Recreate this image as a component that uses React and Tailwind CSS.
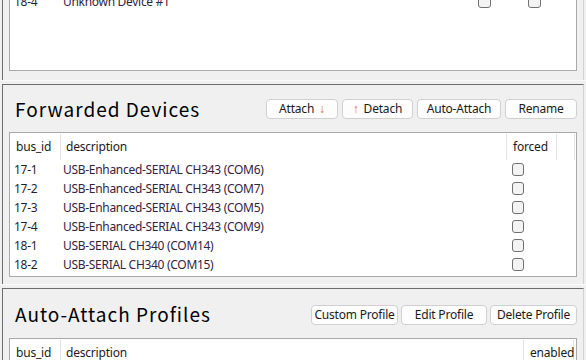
import React from "react";

const ui = { fontFamily: '"Noto Sans", "Open Sans", sans-serif' };
const title = { fontFamily: '"Noto Sans CJK JP", "Noto Sans", sans-serif' };

const forwarded = [
  { id: "17-1", desc: "USB-Enhanced-SERIAL CH343 (COM6)" },
  { id: "17-2", desc: "USB-Enhanced-SERIAL CH343 (COM7)" },
  { id: "17-3", desc: "USB-Enhanced-SERIAL CH343 (COM5)" },
  { id: "17-4", desc: "USB-Enhanced-SERIAL CH343 (COM9)" },
  { id: "18-1", desc: "USB-SERIAL CH340 (COM14)" },
  { id: "18-2", desc: "USB-SERIAL CH340 (COM15)" },
];

function Check({ w = "w-[12px]" }) {
  return (
    <span className={`block ${w} h-[13px] rounded-[3px] border border-[#717171] bg-[#f3f3f3]`} />
  );
}

function Btn({ children, w }) {
  return (
    <button
      className={`h-[20px] ${w} rounded-[4px] border border-[#d0d0d0] bg-[#fdfdfd] text-[12px] tracking-[-0.2px] leading-none text-[#1a1a1a] flex items-center justify-center`}
    >
      {children}
    </button>
  );
}

function HeaderCell({ children, className = "" }) {
  return (
    <div className={`h-[26px] flex items-center border-r border-[#e3e3e3] ${className}`}>
      {children}
    </div>
  );
}

export default function App() {
  return (
    <div className="w-[586px] h-[360px] overflow-hidden bg-[#f0f0f0] flex flex-col" style={ui}>
      {/* Top panel: connected devices (scrolled) */}
      <div className="ml-[2px] w-[582px] h-[80px] shrink-0 border-l border-r border-l-[#6d6d6d] border-r-[#d2d2d2] pl-[6px] pb-[9px] flex flex-col">
        <div className="w-[568px] flex-1 bg-white border border-t-0 border-[#a9a9a9] overflow-hidden">
          <div className="-mt-[8px] h-[19px] flex items-center text-[12px] tracking-[-0.3px]">
            <span className="w-[53px] pl-[4px] text-[#1f1f2e]">18-4</span>
            <span className="flex-1 text-[#34223f]">Unknown Device #1</span>
            <span className="w-[13px] mr-[37px]">
              <Check w="w-[13px]" />
            </span>
            <span className="w-[13px] mr-[35px]">
              <Check w="w-[13px]" />
            </span>
          </div>
        </div>
      </div>

      {/* sash */}
      <div className="h-[4px] shrink-0 border-t border-[#fafafa]" />

      {/* Forwarded Devices */}
      <div className="ml-[2px] w-[582px] h-[200px] shrink-0 border-t border-l border-r border-t-[#6d6d6d] border-l-[#6d6d6d] border-r-[#d2d2d2] pl-[6px] flex flex-col">
        <div className="h-[47px] flex items-center pr-[6px]">
          <div className="flex-1 pl-[6px] text-[19px] tracking-[1px] leading-none text-black" style={title}>
            Forwarded Devices
          </div>
          <div className="flex gap-[4px] mt-[1px]">
            <Btn w="w-[72px]">
              Attach <span className="ml-[5px] text-[#d9682c]">↓</span>
            </Btn>
            <Btn w="w-[71px]">
              <span className="mr-[5px] text-[#d9682c]">↑</span> Detach
            </Btn>
            <Btn w="w-[84px]">Auto-Attach</Btn>
            <Btn w="w-[72px]">Rename</Btn>
          </div>
        </div>
        <div className="w-[568px] h-[145px] bg-white border border-[#a9a9a9] flex flex-col">
          <div className="flex pt-[1px] text-[12px] tracking-[-0.2px] text-[#1a1a1a]">
            <HeaderCell className="w-[51px] pl-[6px]">bus_id</HeaderCell>
            <HeaderCell className="w-[446px] pl-[5px]">description</HeaderCell>
            <HeaderCell className="w-[50px] pl-[6px]">forced</HeaderCell>
            <HeaderCell className="w-[18px]" />
          </div>
          {forwarded.map((r) => (
            <div key={r.id} className="h-[19px] flex items-center text-[12px] tracking-[-0.3px]">
              <span className="w-[53px] pl-[4px] text-[#1f1f2e]">{r.id}</span>
              <span className="w-[449px] text-[#34223f]">{r.desc}</span>
              <Check />
            </div>
          ))}
        </div>
      </div>

      {/* sash */}
      <div className="h-[4px] shrink-0 border-t border-[#fafafa]" />

      {/* Auto-Attach Profiles */}
      <div className="ml-[2px] w-[582px] flex-1 border-t border-l border-r border-t-[#6d6d6d] border-l-[#6d6d6d] border-r-[#d2d2d2] pl-[6px] flex flex-col">
        <div className="h-[49px] flex items-center pr-[6px]">
          <div className="flex-1 pl-[6px] text-[19px] tracking-[1px] leading-none text-black" style={title}>
            Auto-Attach Profiles
          </div>
          <div className="flex gap-[3px] mt-[2px]">
            <Btn w="w-[87px]">Custom Profile</Btn>
            <Btn w="w-[86px]">Edit Profile</Btn>
            <Btn w="w-[87px]">Delete Profile</Btn>
          </div>
        </div>
        <div className="w-[568px] flex-1 bg-white border border-b-0 border-[#a9a9a9] flex flex-col">
          <div className="flex pt-[1px] text-[12px] tracking-[-0.2px] text-[#1a1a1a]">
            <HeaderCell className="w-[51px] pl-[6px]">bus_id</HeaderCell>
            <HeaderCell className="w-[463px] pl-[5px]">description</HeaderCell>
            <HeaderCell className="w-[50px] pl-[6px]">enabled</HeaderCell>
          </div>
        </div>
      </div>
    </div>
  );
}
